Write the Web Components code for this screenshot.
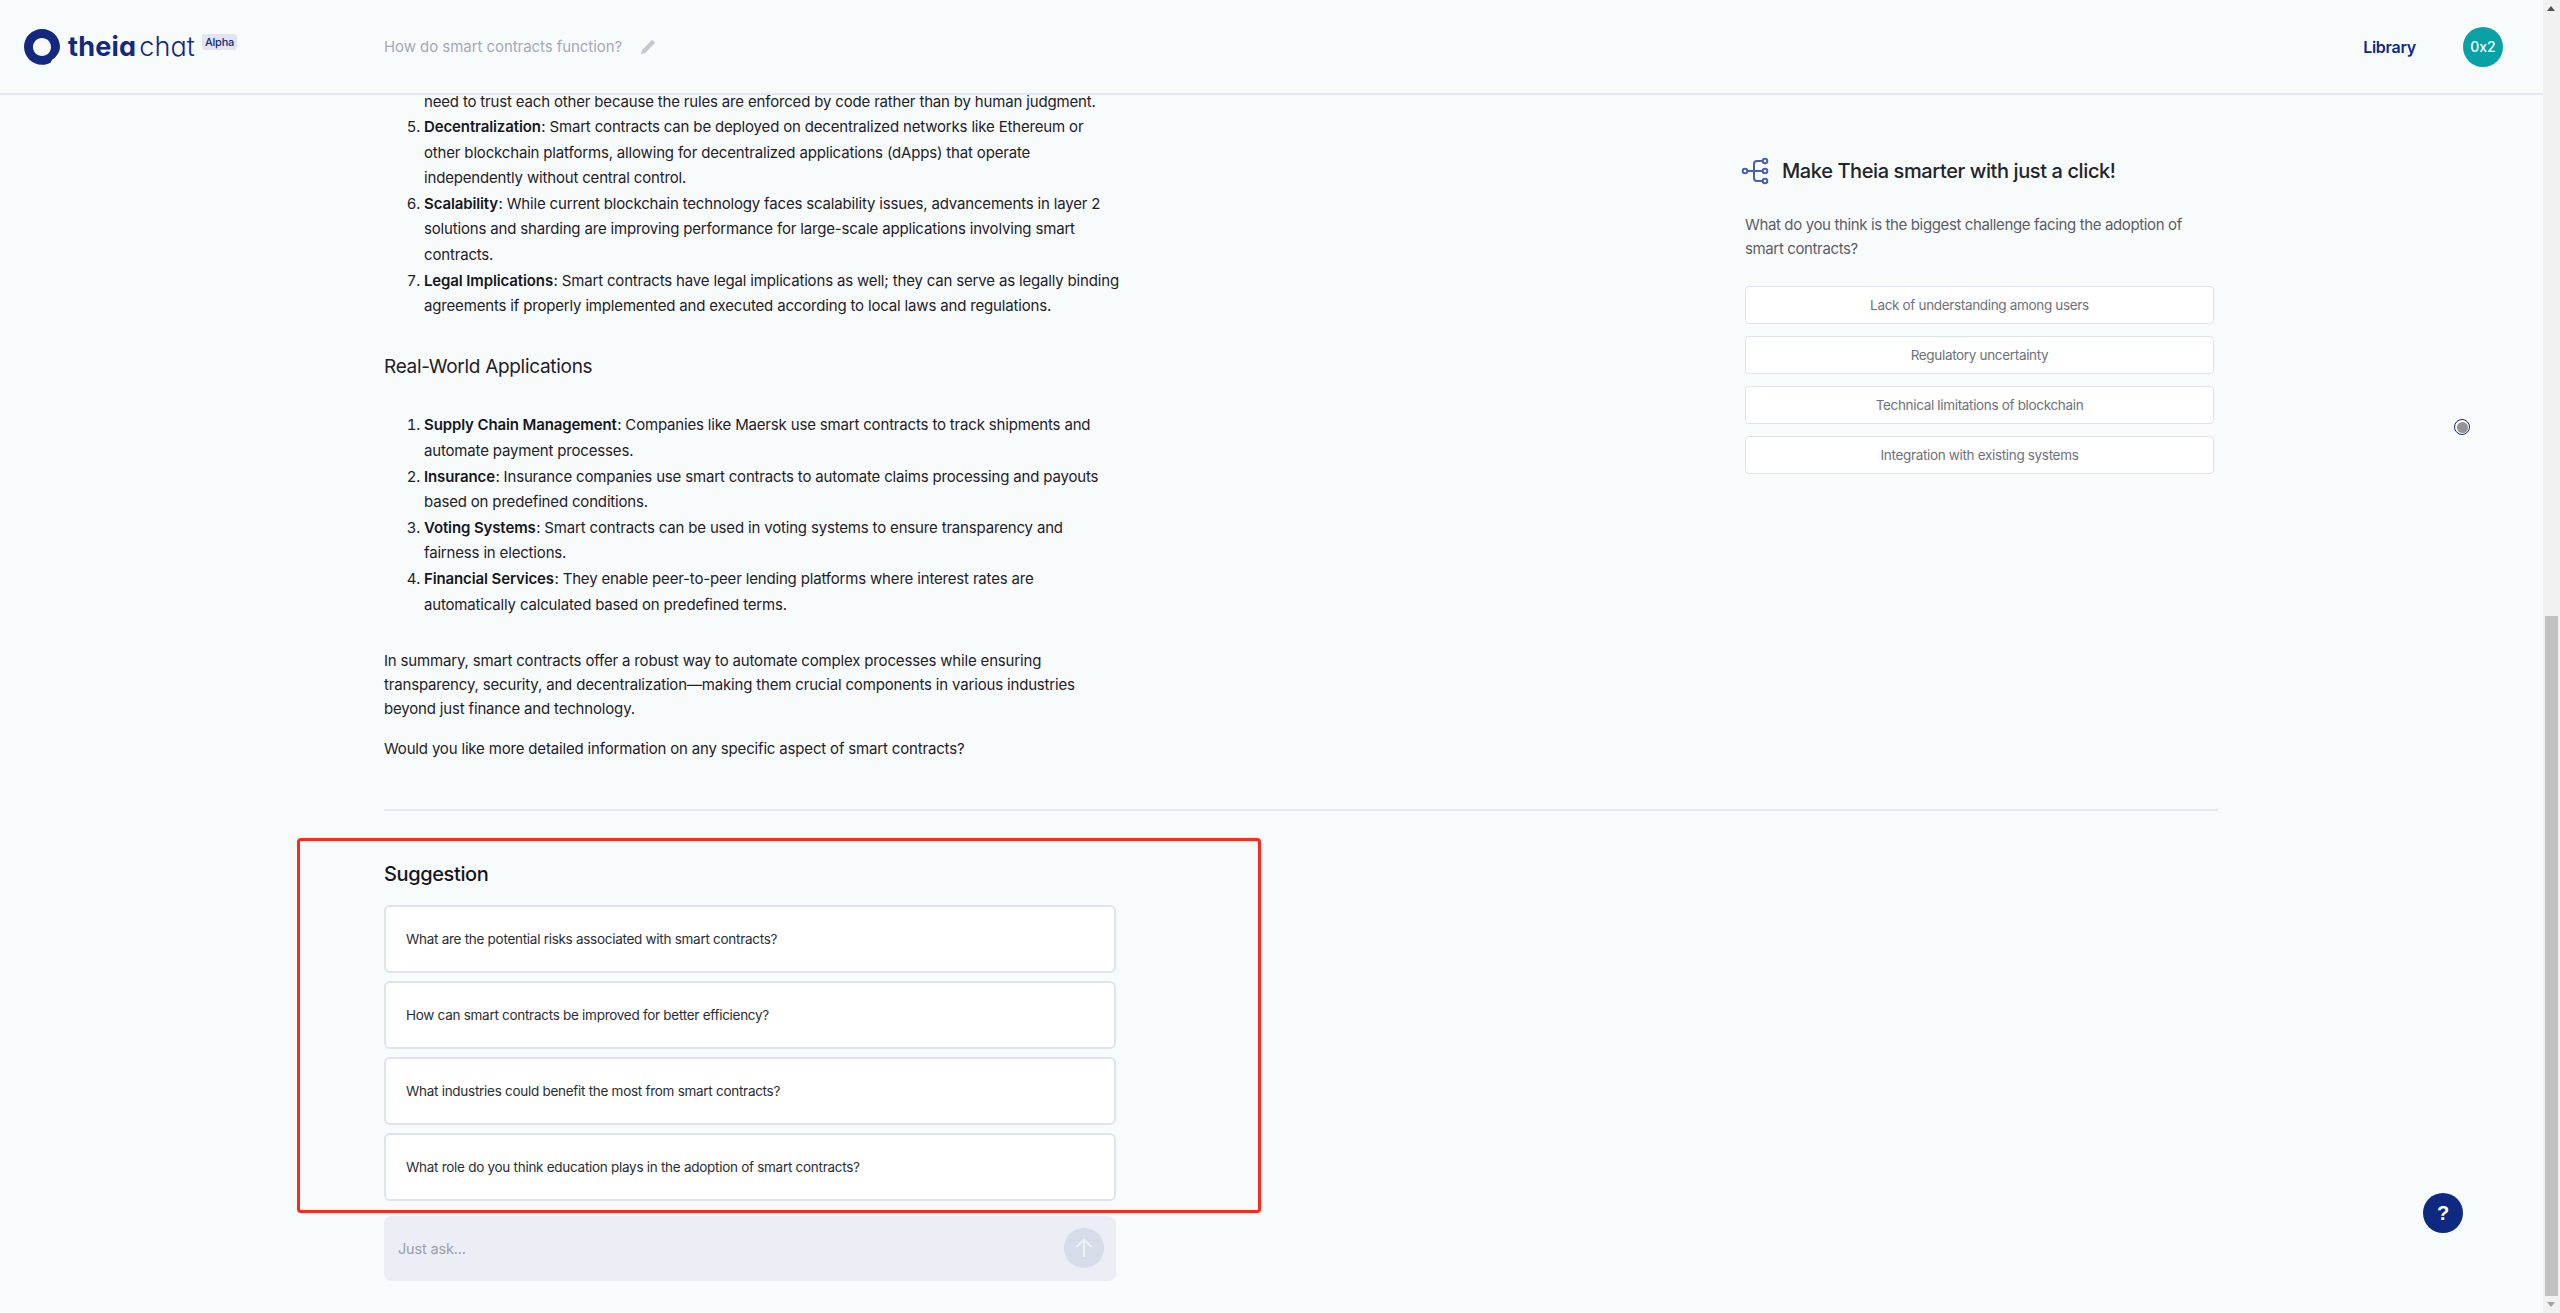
<!DOCTYPE html>
<html lang="en"><head><meta charset="utf-8"><title>Theia chat</title>
<style>
html,body{margin:0;padding:0;height:100%;overflow:hidden;background:#f8fbfc;}
body{font-family:Inter,"Liberation Sans",sans-serif;color:#1f2127;}
</style></head><body>
<app-root></app-root>
<script>
function def(name, html, init){
  customElements.define(name, class extends HTMLElement{
    constructor(){super();this.attachShadow({mode:'open'}).innerHTML=html;}
    connectedCallback(){ if(init) init(this); }
  });
}
def('theia-logo',`<style>
:host{display:flex;align-items:center;color:#12297f;flex:none;width:214px}
svg{width:38px;height:38px;display:block;flex:none}
.w{display:flex;align-items:baseline;margin-left:7px;font-family:Inter,sans-serif;font-feature-settings:"cv11" 1;font-size:27px;line-height:36px}
b{font-weight:700;letter-spacing:.2px}
span{font-weight:300;margin-left:3px;letter-spacing:.1px}
i{font:500 11px/16px Inter,sans-serif;background:#e1e5f1;border-radius:3px;padding:0 3px;height:16px;margin:-10px 0 0 7px;letter-spacing:-.2px;align-self:center;font-style:normal}
</style>
<svg viewBox="0 0 38 38"><path fill="#12297f" fill-rule="evenodd" d="M19 1C9.100 1 1 9 1 18.800 1 28.700 9.100 36.800 19 36.800c3.200 0 6.200-.8 8.800-2.300.3-2 1.700-3.600 3.500-4.300C35 27 37 23 37 18.800 37 9 28.900 1 19 1zM19 10c5 0 9 4 9 8.900 0 5-4 9-9 9s-9-4-9-9C10 14 14 10 19 10z"/></svg>
<div class="w"><b>theia</b><span>chat</span></div><i>Alpha</i>`);

def('app-header',`<style>
:host{display:flex;align-items:center;height:95px;box-sizing:border-box;border-bottom:2px solid #e3e7f0;padding:0 40px 0 23px;position:relative;z-index:2;background:#f8fbfc;flex:none}
.t{margin-left:147px;display:flex;align-items:center;gap:17px;font-size:15px;color:#a5a9b6;letter-spacing:-.06px}
.t svg{width:18px;height:18px;display:block}
.l{margin-left:auto;font-size:16px;font-weight:600;color:#12297f;letter-spacing:-.25px}
.a{margin-left:47px;width:40px;height:40px;border-radius:50%;background:#08a1a6;color:#fff;font-size:14px;font-weight:500;display:flex;align-items:center;justify-content:center}
</style>
<theia-logo></theia-logo>
<div class="t">How do smart contracts function?<svg viewBox="0 0 18 18"><path fill="#c3c7d1" d="M13.200 1.800l3 3L6 15l-4.200 1.200L3 12z"/></svg></div>
<div class="l">Library</div><div class="a">0x2</div>`);

def('answer-text',`<style>
:host{display:block;font-size:15px;color:#1f2127;letter-spacing:-.17px}
ol{margin:0;padding:0 0 0 40px;line-height:25.6px}
ol.a{margin-top:-6.500px}
b{font-weight:600;color:#15171c;letter-spacing:-.12px;margin-right:.5px}
h3{margin:32px 0 29.500px;font-size:19px;font-weight:400;line-height:32px;letter-spacing:-.3px}
p{margin:0;line-height:24px}
p.s{margin-top:32px}
p.w{margin-top:16px}
</style>
<ol class="a" start="4">
<li style="list-style:none">need to trust each other because the rules are enforced by code rather than by human judgment.</li>
<li><b>Decentralization</b>: Smart contracts can be deployed on decentralized networks like Ethereum or other blockchain platforms, allowing for decentralized applications (dApps) that operate independently without central control.</li>
<li><b>Scalability</b>: While current blockchain technology faces scalability issues, advancements in layer 2 solutions and sharding are improving performance for large-scale applications involving smart contracts.</li>
<li><b>Legal Implications</b>: Smart contracts have legal implications as well; they can serve as legally binding agreements if properly implemented and executed according to local laws and regulations.</li>
</ol>
<h3>Real-World Applications</h3>
<ol>
<li><b>Supply Chain Management</b>: Companies like Maersk use smart contracts to track shipments and automate payment processes.</li>
<li><b>Insurance</b>: Insurance companies use smart contracts to automate claims processing and payouts based on predefined conditions.</li>
<li><b>Voting Systems</b>: Smart contracts can be used in voting systems to ensure transparency and fairness in elections.</li>
<li><b>Financial Services</b>: They enable peer-to-peer lending platforms where interest rates are automatically calculated based on predefined terms.</li>
</ol>
<p class="s">In summary, smart contracts offer a robust way to automate complex processes while ensuring transparency, security, and decentralization—making them crucial components in various industries beyond just finance and technology.</p>
<p class="w">Would you like more detailed information on any specific aspect of smart contracts?</p>`);

def('poll-option',`<style>
:host{display:flex;align-items:center;justify-content:center;height:38px;box-sizing:border-box;background:#fff;border:1px solid #dfe3ee;border-radius:4px;font-size:13.5px;color:#6e717b;letter-spacing:-.33px}
</style><slot></slot>`);

def('quick-poll',`<style>
:host{display:block;width:469px;margin-top:58.500px;flex:none}
.h{display:flex;align-items:center;gap:13px;margin-left:-4px;height:34px;font-size:20px;font-weight:500;color:#22242a;letter-spacing:-.4px}
svg{width:28px;height:28px;display:block;flex:none}
p{margin:25.500px 0 24.500px;font-size:15px;line-height:24px;color:#5b5e67;letter-spacing:-.37px}
.o{display:flex;flex-direction:column;gap:12px}
</style>
<div class="h"><svg viewBox="0 0 28 28" fill="none" stroke="#4760b4" stroke-width="2"><circle cx="4" cy="14" r="2.300"/><circle cx="24" cy="4" r="2.300"/><circle cx="24" cy="14" r="2.300"/><circle cx="24" cy="24" r="2.300"/><path d="M6.300 14H21.700M21.700 4H16a3 3 0 0 0-3 3V21a3 3 0 0 0 3 3H21.700"/></svg>Make Theia smarter with just a click!</div>
<p>What do you think is the biggest challenge facing the adoption of smart contracts?</p>
<div class="o"><poll-option>Lack of understanding among users</poll-option><poll-option>Regulatory uncertainty</poll-option><poll-option>Technical limitations of blockchain</poll-option><poll-option>Integration with existing systems</poll-option></div>`);

def('suggestion-card',`<style>
:host{display:flex;align-items:center;height:68px;box-sizing:border-box;padding:0 20px;background:#fff;border:2px solid #dfe3ee;border-radius:6px;font-size:13.5px;color:#2b2d33;letter-spacing:-.28px}
</style><slot></slot>`);

def('suggestion-list',`<style>
:host{display:block}
h4{margin:0 0 19px;font-size:20px;line-height:24px;font-weight:500;color:#15171c;letter-spacing:-.38px}
div{display:flex;flex-direction:column;gap:8px}
</style><h4>Suggestion</h4><div><slot></slot></div>`);

def('chat-input',`<style>
:host{display:flex;align-items:center;justify-content:space-between;height:65px;box-sizing:border-box;margin-top:15px;padding:0 12px 0 14px;background:#ebeef4;border-radius:8px;font-size:14.5px;color:#9a9eac;letter-spacing:-.16px}
.b{width:40px;height:40px;border-radius:50%;background:#d6dcea;display:flex;align-items:center;justify-content:center}
svg{width:24px;height:24px}
</style>Just ask...<div class="b"><svg viewBox="0 0 24 24" fill="none" stroke="#eef1f7" stroke-width="2"><path d="M12 21V3.500M4.500 11 12 3.500 19.500 11"/></svg></div>`);

def('fake-scrollbar',`<style>
:host{display:block;width:17px;flex:none;background:#f1f1f1;position:relative;z-index:3}
.u,.d{position:absolute;left:4px;width:0;height:0;border-left:4px solid transparent;border-right:4px solid transparent}
.u{top:6px;border-bottom:5px solid #505050;left:4px}
.d{bottom:6px;border-top:5px solid #a3a3a3}
.t{position:absolute;left:2px;width:13px;top:616px;height:680px;background:#c1c1c1}
</style><div class="u"></div><div class="t"></div><div class="d"></div>`);

def('app-root',`<style>
:host{display:flex;height:1313px;overflow:hidden;position:relative;background:#f8fbfc}
.m{flex:1;min-width:0;display:flex;flex-direction:column;height:1313px}
.c{flex:1;min-height:0;padding-left:384px}
.w{width:1834px}
.r{display:flex;justify-content:space-between;padding-right:4px;align-items:flex-start}
.chat{width:736px;flex:none}
hr{border:0;border-top:2px solid #e6e9f1;margin:47.500px 0 51px}
.s{width:732px}
.red{position:absolute;left:297px;top:838px;width:964px;height:375px;box-sizing:border-box;border:3px solid #fb2a1e;border-radius:4px;pointer-events:none}
.dot{position:absolute;left:2454px;top:419px;width:16px;height:16px;box-sizing:border-box;border:1.500px solid #12297f;border-radius:50%;background:#fff;padding:1.500px}
.dot i{display:block;width:100%;height:100%;border-radius:50%;background:#949494}
.fab{position:absolute;left:2423px;top:1193px;width:40px;height:40px;border-radius:50%;background:#0e2a80;color:#fff;font:700 20px/40px "Liberation Sans",sans-serif;text-align:center}
</style>
<div class="m"><app-header></app-header>
<div class="c"><div class="w">
<div class="r"><div class="chat"><answer-text></answer-text></div><quick-poll></quick-poll></div>
<hr>
<div class="s"><suggestion-list>
<suggestion-card>What are the potential risks associated with smart contracts?</suggestion-card>
<suggestion-card>How can smart contracts be improved for better efficiency?</suggestion-card>
<suggestion-card>What industries could benefit the most from smart contracts?</suggestion-card>
<suggestion-card>What role do you think education plays in the adoption of smart contracts?</suggestion-card>
</suggestion-list><chat-input></chat-input></div>
</div></div></div>
<fake-scrollbar></fake-scrollbar>
<div class="red"></div><div class="dot"><i></i></div><div class="fab">?</div>`);
</script>
</body></html>
